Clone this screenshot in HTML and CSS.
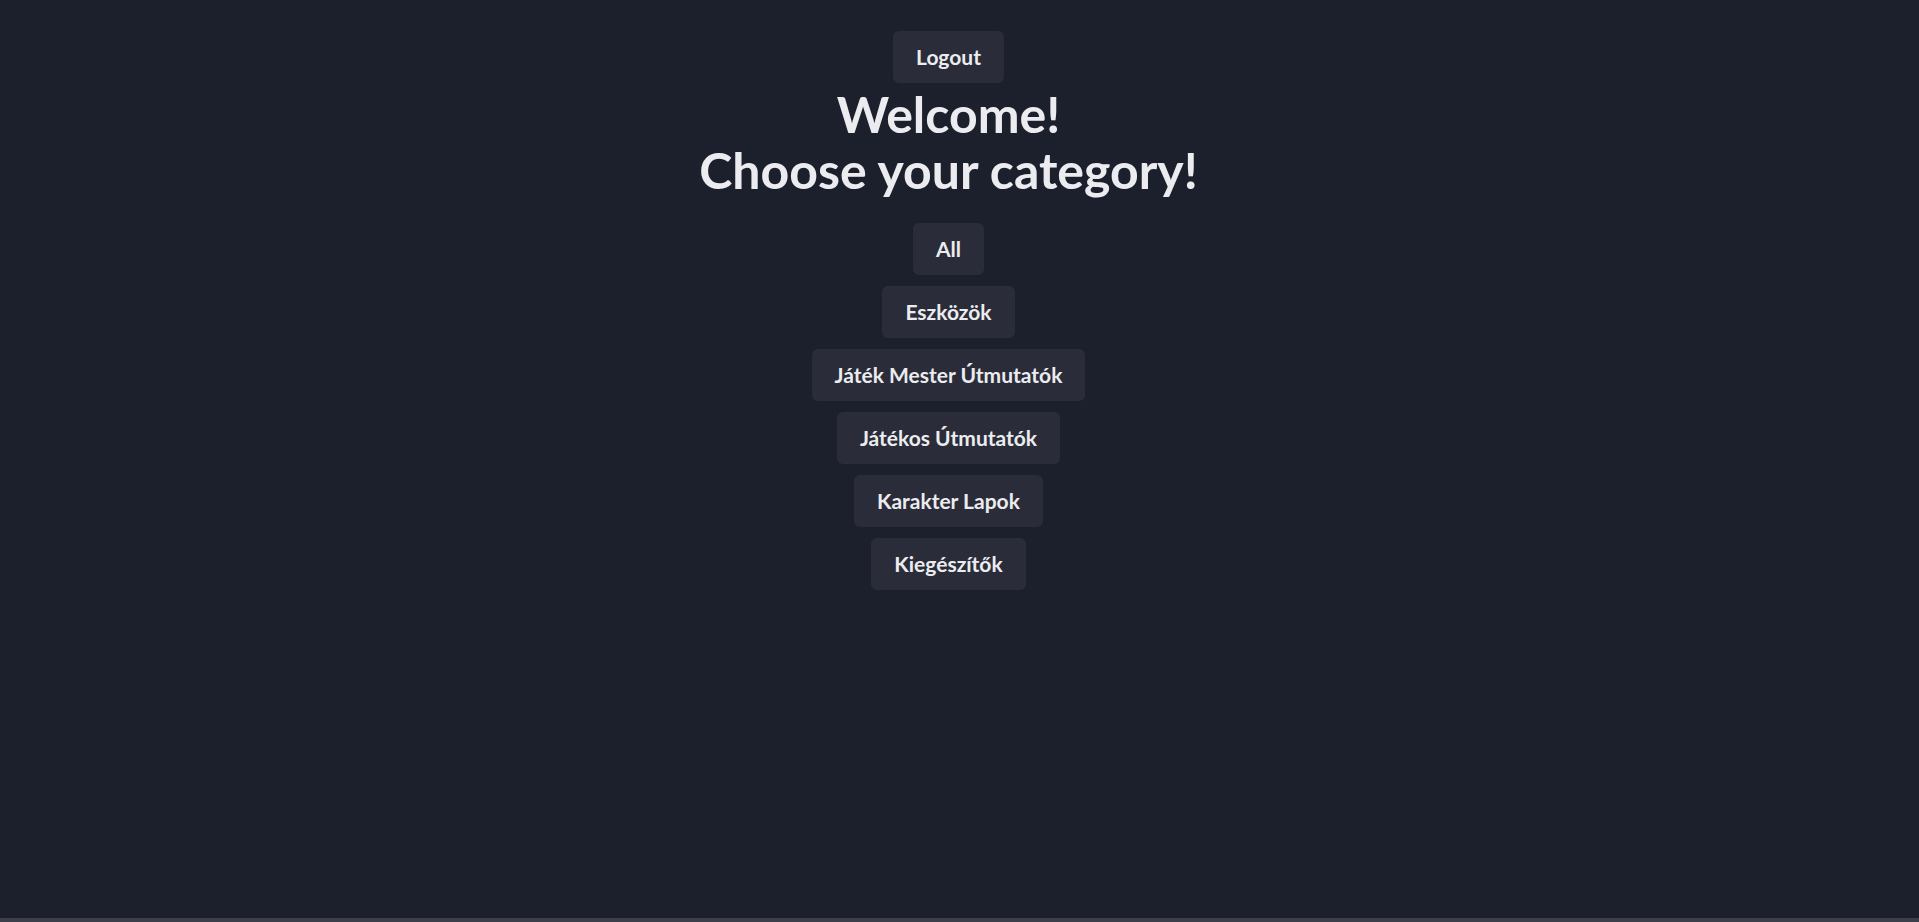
FILE: index.html
```html
<!DOCTYPE html>
<html lang="hu">
<head>
<meta charset="utf-8">
<title>Categories</title>
<link rel="stylesheet" href="styles.css">
</head>
<body>
<main class="page">
  <button class="btn logout">Logout</button>
  <h1 class="title">Welcome!<br>Choose your category!</h1>
  <nav class="categories">
    <button class="btn">All</button>
    <button class="btn">Eszközök</button>
    <button class="btn">Játék Mester Útmutatók</button>
    <button class="btn">Játékos Útmutatók</button>
    <button class="btn">Karakter Lapok</button>
    <button class="btn">Kiegészítők</button>
  </nav>
</main>
</body>
</html>
```
FILE: styles.css
```css
html {
  background: #3c3f48;
}
body {
  margin: 0;
  min-height: 918px;
  background: #1b202c;
  color: #ececf0;
  font-family: "Lato", "Open Sans", sans-serif;
}
.page {
  display: flex;
  flex-direction: column;
  align-items: center;
  padding: 31px 22px 0 0;
}
.btn {
  font-family: inherit;
  font-size: 21px;
  line-height: 28px;
  font-weight: 700;
  color: #ececf0;
  background: #2a2d39;
  border: none;
  border-radius: 6px;
  padding: 12px 23px;
  cursor: pointer;
}
.title {
  margin: 3px 0 25px;
  font-size: 50px;
  line-height: 56px;
  font-weight: 700;
  text-align: center;
}
.categories {
  display: flex;
  flex-direction: column;
  align-items: center;
  gap: 11px;
}
```
